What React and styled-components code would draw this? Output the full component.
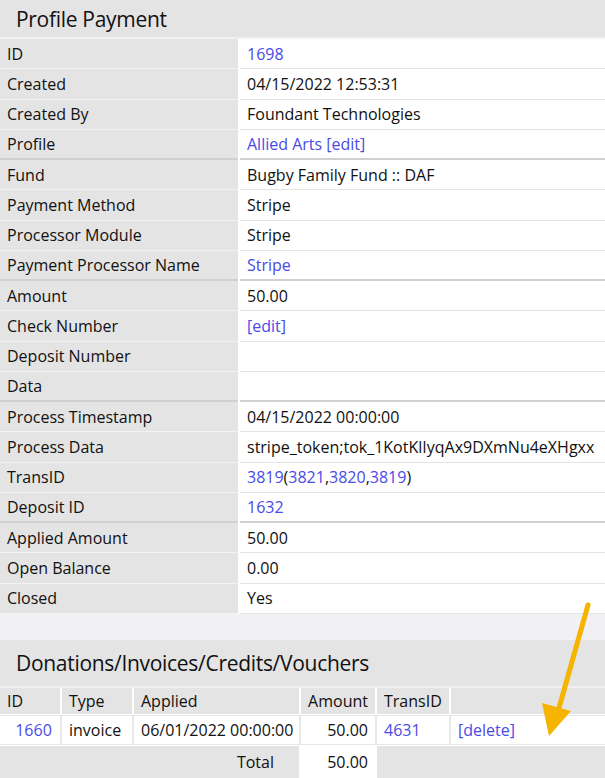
import React from "react";
import styled, { createGlobalStyle } from "styled-components";

const Global = createGlobalStyle`
  html,body{margin:0;padding:0;background:#fff;}
  *{box-sizing:border-box;}
  body{font-family:"Open Sans","Noto Sans",sans-serif;font-size:16px;color:#111;}
`;
const Page = styled.div`width:605px;height:778px;overflow:hidden;position:relative;background:#fff;`;
const Title = styled.div`background:#e4e4e4;height:${p=>p.h}px;display:flex;align-items:center;padding-left:16px;font-size:21px;font-weight:500;letter-spacing:-0.3px;border-bottom:2px solid #f0f0f0;`;
const Table = styled.div`display:grid;grid-template-columns:238px 1fr;column-gap:2px;background:#fff;`;
const Row = styled.div`display:contents;`;
const Label = styled.div`background:#e4e4e4;height:30.25px;display:flex;align-items:center;padding-left:7px;border-bottom:${p=>p.thick?2:1}px solid ${p=>p.thick?"#d0d0d0":"#f2f2f2"};white-space:nowrap;`;
const Value = styled.div`height:30.25px;display:flex;align-items:center;padding-left:7px;border-bottom:${p=>p.thick?2:1}px solid ${p=>p.thick?"#d0d0d0":"#e4e4e4"};white-space:nowrap;overflow:hidden;`;
const A = styled.span`color:#4a4ae8;`;
const Band = styled.div`height:26px;background:#f0f0f5;`;
const Grid = styled.div`display:grid;grid-template-columns:60px 70px 165px 74px 72px 1fr;column-gap:2px;row-gap:2px;background:#fff;`;
const H = styled.div`background:#e4e4e4;height:26px;display:flex;align-items:center;padding-left:7px;justify-content:${p=>p.right?"flex-end":"flex-start"};padding-right:${p=>p.right?7:0}px;`;
const C = styled.div`height:28px;display:flex;align-items:center;padding-left:7px;justify-content:${p=>p.right?"flex-end":p.center?"center":"flex-start"};padding-right:${p=>p.right?7:0}px;box-shadow:0 0 0 1px #e8e8e8;`;
const TotalCell = styled.div`grid-column:${p=>p.span};background:${p=>p.white?"#fff":"#e4e4e4"};height:33px;display:flex;align-items:center;justify-content:flex-end;padding-right:${p=>p.pr}px;`;
const Arrow = styled.svg`position:absolute;left:0;top:0;pointer-events:none;`;

const rows = [
  ["ID", <A>1698</A>],
  ["Created", "04/15/2022 12:53:31"],
  ["Created By", "Foundant Technologies"],
  ["Profile", <A>Allied Arts [edit]</A>, 1],
  ["Fund", "Bugby Family Fund :: DAF"],
  ["Payment Method", "Stripe"],
  ["Processor Module", "Stripe"],
  ["Payment Processor Name", <A>Stripe</A>, 1],
  ["Amount", "50.00"],
  ["Check Number", <A>[edit]</A>],
  ["Deposit Number", ""],
  ["Data", "", 1],
  ["Process Timestamp", "04/15/2022 00:00:00"],
  ["Process Data", "stripe_token;tok_1KotKlIyqAx9DXmNu4eXHgxx"],
  ["TransID", <><A>3819</A>{" ("}<A>3821</A>,<A>3820</A>,<A>3819</A>)</>],
  ["Deposit ID", <A>1632</A>, 1],
  ["Applied Amount", "50.00"],
  ["Open Balance", "0.00"],
  ["Closed", "Yes"],
];

export default function App(){
  return <Page><Global/>
    <Title h={39}>Profile Payment</Title>
    <Table>{rows.map(([l,v,t],i)=><Row key={i}><Label thick={t}>{l}</Label><Value thick={t}>{v}</Value></Row>)}</Table>
    <Band/>
    <Title h={48}>Donations/Invoices/Credits/Vouchers</Title>
    <Grid>
      <H>ID</H><H>Type</H><H>Applied</H><H right>Amount</H><H>TransID</H><H/>
      <C center><A>1660</A></C><C>invoice</C><C>06/01/2022 00:00:00</C><C right>50.00</C><C><A>4631</A></C><C><A>[delete]</A></C>
      <TotalCell span="1 / 4" pr={25}>Total</TotalCell><TotalCell white span="4 / 5" pr={7}>50.00</TotalCell><TotalCell span="5 / 7"/>
    </Grid>
    <Arrow width="605" height="778">
      <line x1="588" y1="605" x2="557" y2="715" stroke="#f5b400" strokeWidth="5" strokeLinecap="round"/>
      <polygon points="549,736 542,703 571,711" fill="#f5b400"/>
    </Arrow>
  </Page>;
}
